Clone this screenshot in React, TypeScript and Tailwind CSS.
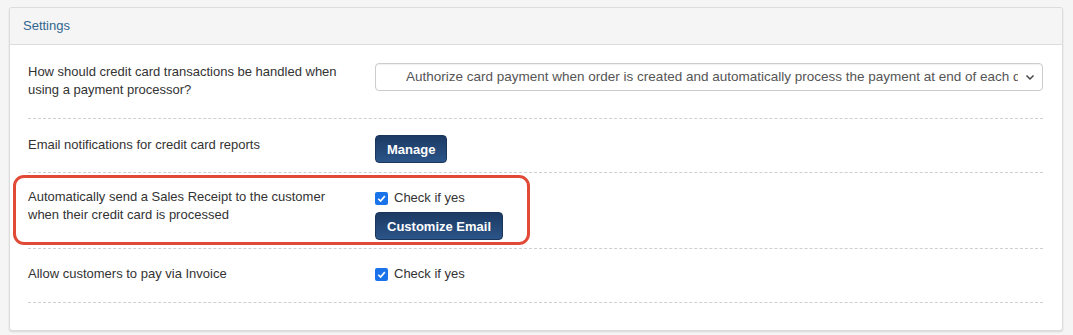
import React from "react";

const font = { fontFamily: '"Liberation Sans", Arial, sans-serif' };

const NavyButton: React.FC<{ label: string }> = ({ label }) => (
  <button className="h-[28px] px-[11px] rounded-[4px] bg-gradient-to-b from-[#1c3a63] to-[#2b5589] text-white text-[13px] font-bold leading-none border border-[#1a355a]">
    {label}
  </button>
);

const CheckYes: React.FC = () => (
  <label className="flex items-center gap-[6px] text-[13px] text-[#333] h-[20px]">
    <span className="w-[13px] h-[13px] rounded-[2px] bg-[#1a73e8] flex items-center justify-center">
      <svg width="11" height="11" viewBox="0 0 12 12">
        <path d="M2.5 6.3 L5 8.7 L9.6 3.4" stroke="white" strokeWidth="1.8" fill="none" />
      </svg>
    </span>
    Check if yes
  </label>
);

export default function App() {
  return (
    <div className="min-h-[335px] bg-[#f5f5f5] pt-[7px] pl-[9px] pr-[10px]" style={font}>
      <div className="bg-white border border-[#dcdcdc] rounded-[3px] shadow-[0_1px_2px_rgba(0,0,0,0.12)]">
        <div className="h-[37px] bg-[#f5f5f5] border-b border-[#dddddd] flex items-center px-[13px] rounded-t-[3px]">
          <span className="text-[13px] text-[#31668f]">Settings</span>
        </div>
        <div className="pl-[18px] pr-[19px] pb-[27px]">
          {/* row 1 */}
          <div className="flex pt-[18px] pb-[19px] border-b border-dashed border-[#cfcfcf]">
            <div className="w-[347px] pr-[27px] text-[13px] leading-[18px] text-[#333]">
              How should credit card transactions be handled when using a payment processor?
            </div>
            <div className="flex-1 min-w-0">
              <div className="h-[28px] border border-[#cccccc] rounded-[4px] shadow-[inset_0_1px_1px_rgba(0,0,0,0.06)] flex items-center pl-[30px] pr-[6px]">
                <span className="flex-1 min-w-0 whitespace-nowrap overflow-hidden text-[13.5px] text-[#555]">
                  Authorize card payment when order is created and automatically process the payment at end of each day
                </span>
                <svg width="12" height="12" viewBox="0 0 12 12" className="ml-[6px] shrink-0">
                  <path d="M2.5 4.5 L6 8 L9.5 4.5" stroke="#444" strokeWidth="1.5" fill="none" />
                </svg>
              </div>
            </div>
          </div>

          {/* row 2 */}
          <div className="flex pt-[16px] pb-[9px] border-b border-dashed border-[#cfcfcf]">
            <div className="w-[347px] pr-[27px] text-[13px] leading-[18px] text-[#333] pt-[1px]">
              Email notifications for credit card reports
            </div>
            <div className="flex-1">
              <NavyButton label="Manage" />
            </div>
          </div>

          {/* row 3 (highlighted) */}
          <div className="relative flex pt-[15px] pb-[8px] border-b border-dashed border-[#cfcfcf]">
            <div className="absolute left-[-15px] top-[2px] w-[517px] h-[70px] border-[3px] border-[#e04a36] rounded-[11px] pointer-events-none" />
            <div className="w-[347px] pr-[27px] text-[13px] leading-[18px] text-[#333]">
              Automatically send a Sales Receipt to the customer when their credit card is processed
            </div>
            <div className="flex-1 flex flex-col items-start gap-[4px]">
              <CheckYes />
              <NavyButton label="Customize Email" />
            </div>
          </div>

          {/* row 4 */}
          <div className="flex pt-[15px] pb-[18px] border-b border-dashed border-[#cfcfcf]">
            <div className="w-[347px] pr-[27px] text-[13px] leading-[18px] text-[#333] pt-[1px]">
              Allow customers to pay via Invoice
            </div>
            <div className="flex-1">
              <CheckYes />
            </div>
          </div>
        </div>
      </div>
    </div>
  );
}
